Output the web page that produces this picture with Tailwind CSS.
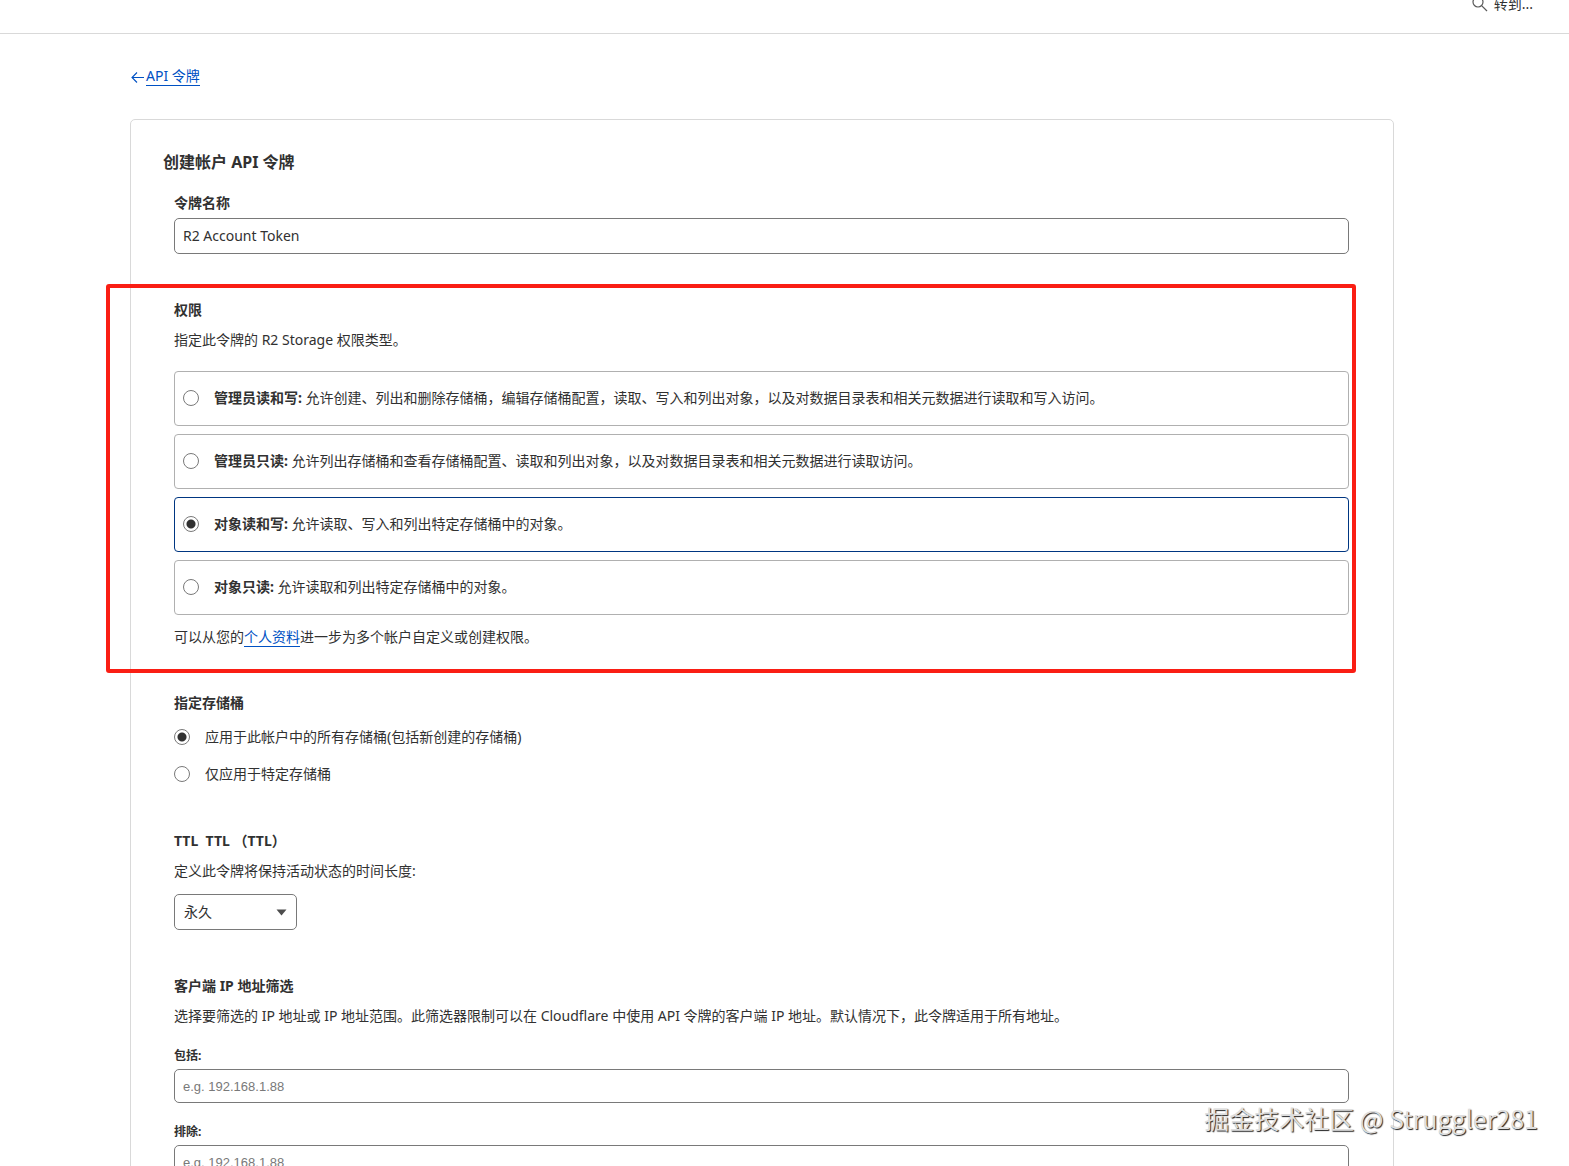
<!DOCTYPE html>
<html lang="zh-CN">
<head>
    <meta charset="UTF-8">
    <meta name="viewport" content="width=device-width, initial-scale=1.0">
    <title>创建帐户 API 令牌</title>
    <script src="https://cdn.jsdelivr.net/npm/@tailwindcss/browser@4"></script>
</head>
<body class="relative h-screen overflow-hidden bg-white text-[14px] leading-5 text-[#313131] font-['Noto_Sans','Noto_Sans_CJK_SC',sans-serif]">
    <header class="flex h-[34px] items-start justify-end border-b border-[#d9d9d9] pr-9">
        <button type="button" class="flex items-center gap-[6px] leading-[6px]">
            <svg class="-my-1 h-4 w-4" viewBox="0 0 16 16" fill="none" stroke="#595959" stroke-width="1.2">
                <circle cx="6" cy="6" r="5"></circle>
                <path d="M9.6 9.6L15 15"></path>
            </svg>
            转到...
        </button>
    </header>

    <main class="ml-[130px] mr-[175px] pt-[33px]">
        <nav class="flex items-center">
            <svg class="h-4 w-4" viewBox="0 0 16 16" fill="none" stroke="#0051c3" stroke-width="1.1">
                <path d="M14 8.5H2M7 3.5L2 8.5l5 5"></path>
            </svg>
            <a href="#" class="border-b border-[#0051c3] leading-[18px] text-[#0051c3]">API 令牌</a>
        </nav>

        <form class="mt-[33px] rounded-[5px] border border-[#d9d9d9] p-8">
            <h1 class="text-[16px] leading-5 font-bold">创建帐户 API 令牌</h1>

            <div class="ml-[11px] mr-3 mt-[21px]">
                <label for="token-name" class="block font-bold">令牌名称</label>
                <input id="token-name" type="text" value="R2 Account Token"
                    class="mt-[5px] block h-9 w-full rounded-[5px] border border-[#797979] px-2 pb-[2px]">
            </div>

            <section class="relative ml-[11px] mr-3 mt-[46px]">
                <h2 class="font-bold">权限</h2>
                <p class="mt-[10px]">指定此令牌的 R2 Storage 权限类型。</p>

                <div class="mt-[21px] space-y-2">
                    <label class="flex h-[55px] items-center gap-[15px] rounded-[4px] border border-[#b0b0b0] px-2 pb-[2px]">
                        <input type="radio" name="permission" class="h-4 w-4 appearance-none rounded-full border border-[#797979] checked:bg-[radial-gradient(circle,#313131_4px,transparent_5px)]">
                        <span><b class="font-bold">管理员读和写:</b> 允许创建、列出和删除存储桶，编辑存储桶配置，读取、写入和列出对象，以及对数据目录表和相关元数据进行读取和写入访问。</span>
                    </label>
                    <label class="flex h-[55px] items-center gap-[15px] rounded-[4px] border border-[#b0b0b0] px-2 pb-[2px]">
                        <input type="radio" name="permission" class="h-4 w-4 appearance-none rounded-full border border-[#797979] checked:bg-[radial-gradient(circle,#313131_4px,transparent_5px)]">
                        <span><b class="font-bold">管理员只读:</b> 允许列出存储桶和查看存储桶配置、读取和列出对象，以及对数据目录表和相关元数据进行读取访问。</span>
                    </label>
                    <label class="flex h-[55px] items-center gap-[15px] rounded-[4px] border border-[#003681] px-2 pb-[2px]">
                        <input type="radio" name="permission" checked class="h-4 w-4 appearance-none rounded-full border border-[#797979] checked:bg-[radial-gradient(circle,#313131_4px,transparent_5px)]">
                        <span><b class="font-bold">对象读和写:</b> 允许读取、写入和列出特定存储桶中的对象。</span>
                    </label>
                    <label class="flex h-[55px] items-center gap-[15px] rounded-[4px] border border-[#b0b0b0] px-2 pb-[2px]">
                        <input type="radio" name="permission" class="h-4 w-4 appearance-none rounded-full border border-[#797979] checked:bg-[radial-gradient(circle,#313131_4px,transparent_5px)]">
                        <span><b class="font-bold">对象只读:</b> 允许读取和列出特定存储桶中的对象。</span>
                    </label>
                </div>
                <p class="mt-3">可以从您的<a href="#" class="border-b border-[#0051c3] text-[#0051c3]">个人资料</a>进一步为多个帐户自定义或创建权限。</p>

                <!-- highlight frame -->
                <div class="pointer-events-none absolute -top-4 -right-[7px] -bottom-[26px] -left-[68px] rounded-[3px] border-4 border-[#fa1e14]"></div>
            </section>

            <fieldset class="ml-[11px] mr-3 mt-[46px]">
                <legend class="font-bold">指定存储桶</legend>
                <label class="mt-[14px] flex items-center gap-[15px]">
                    <input type="radio" name="bucket" checked class="h-4 w-4 appearance-none rounded-full border border-[#797979] checked:bg-[radial-gradient(circle,#313131_4px,transparent_5px)]">
                    应用于此帐户中的所有存储桶(包括新创建的存储桶)
                </label>
                <label class="mt-[17px] flex items-center gap-[15px]">
                    <input type="radio" name="bucket" class="h-4 w-4 appearance-none rounded-full border border-[#797979] checked:bg-[radial-gradient(circle,#313131_4px,transparent_5px)]">
                    仅应用于特定存储桶
                </label>
            </fieldset>

            <section class="ml-[11px] mr-3 mt-[47px]">
                <h2 class="font-bold">TTL &nbsp;TTL （TTL）</h2>
                <label for="ttl" class="mt-[10px] block">定义此令牌将保持活动状态的时间长度:</label>
                <div class="relative mt-[13px] w-[123px]">
                    <select id="ttl" class="block h-9 w-full appearance-none rounded-[5px] border border-[#797979] bg-white px-[9px]">
                        <option>永久</option>
                    </select>
                    <svg class="pointer-events-none absolute top-[15px] right-[10px] h-[7px] w-[11px]" viewBox="0 0 11 7" fill="#4d4d4d">
                        <path d="M0.5 0.5h10L5.5 6.5z"></path>
                    </svg>
                </div>
            </section>

            <section class="ml-[11px] mr-3 mt-[46px]">
                <h2 class="font-bold">客户端 IP 地址筛选</h2>
                <p class="mt-[10px]">选择要筛选的 IP 地址或 IP 地址范围。此筛选器限制可以在 Cloudflare 中使用 API 令牌的客户端 IP 地址。默认情况下，此令牌适用于所有地址。</p>

                <label for="ip-include" class="mt-5 block text-[12px] leading-5 font-bold">包括:</label>
                <input id="ip-include" type="text" placeholder="e.g. 192.168.1.88"
                    class="mt-[3px] block h-[34px] w-full rounded-[5px] border border-[#797979] px-2 text-[13px] font-['Liberation_Sans',sans-serif] placeholder:text-[#797979]">

                <label for="ip-exclude" class="mt-[19px] block text-[12px] leading-5 font-bold">排除:</label>
                <input id="ip-exclude" type="text" placeholder="e.g. 192.168.1.88"
                    class="mt-[3px] block h-[34px] w-full rounded-[5px] border border-[#797979] px-2 text-[13px] font-['Liberation_Sans',sans-serif] placeholder:text-[#797979]">
            </section>
        </form>
    </main>

    <!-- watermark -->
    <div class="pointer-events-none absolute right-[31px] bottom-8 text-[25px] leading-8 text-[#dedede] font-['Noto_Sans_CJK_SC',sans-serif] [text-shadow:1px_1px_1px_#222]">掘金技术社区 @ Struggler281</div>
</body>
</html>
